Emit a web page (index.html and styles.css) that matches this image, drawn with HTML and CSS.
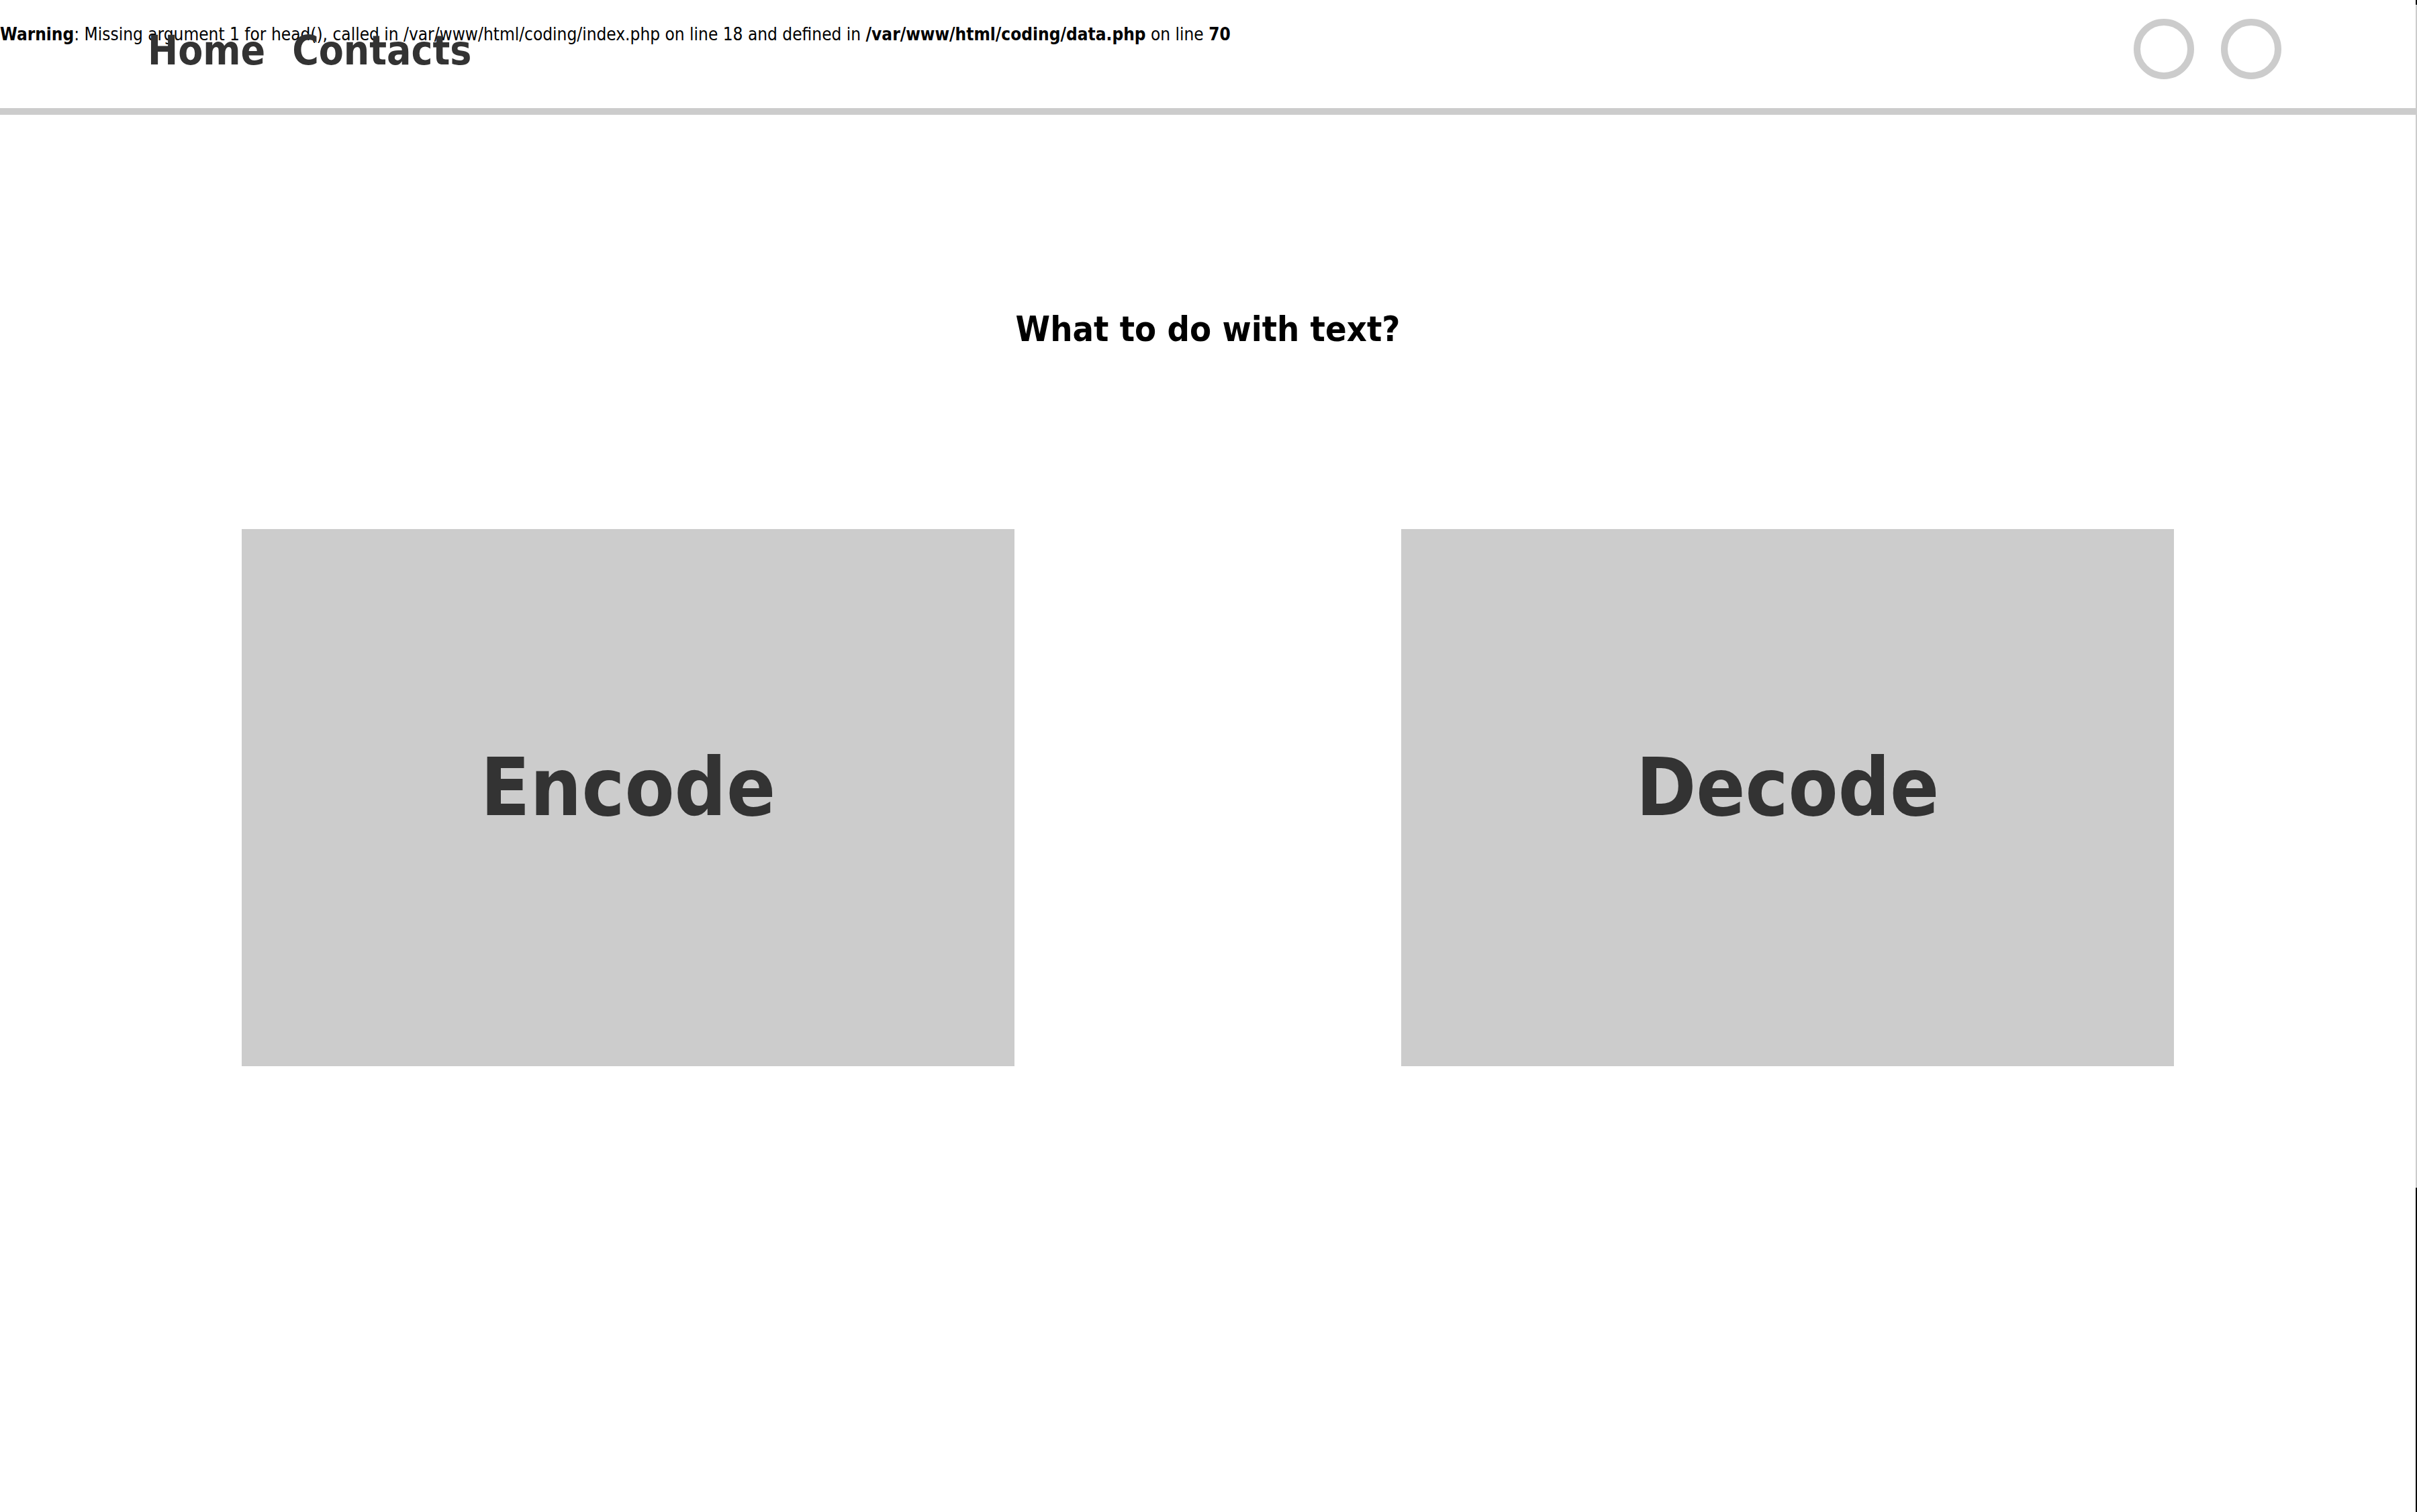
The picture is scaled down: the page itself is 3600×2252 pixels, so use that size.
FILE: index.html
```html
<!DOCTYPE html>
<html lang="en">
<head>
<meta charset="utf-8">
<meta name="viewport" content="width=device-width, initial-scale=1">
<title>Coding</title>
<link rel="stylesheet" href="styles.css">
</head>
<body>
<div class="page">
  <p class="warning"><b>Warning</b>: Missing argument 1 for head(), called in /var/www/html/coding/index.php on line 18 and defined in <b>/var/www/html/coding/data.php</b> on line <b>70</b></p>
  <header class="header">
    <nav class="menu">
      <a href="#">Home</a>
      <a href="#">Contacts</a>
    </nav>
    <div class="social">
      <a class="circle" href="#" aria-label="Profile"></a>
      <a class="circle" href="#" aria-label="Settings"></a>
    </div>
  </header>
  <main class="content">
    <h1 class="title">What to do with text?</h1>
    <div class="choices">
      <a class="choice" href="#">Encode</a>
      <a class="choice" href="#">Decode</a>
    </div>
  </main>
</div>
<div class="track"><div class="thumb"></div></div>
</body>
</html>
```
FILE: styles.css
```css
* {
  box-sizing: border-box;
}

body {
  display: flex;
  min-height: 100vh;
  margin: 0;
  font-family: "DejaVu Sans Condensed", Tahoma, sans-serif;
  color: #000;
}

a {
  color: #333;
  text-decoration: none;
}

.page {
  position: relative;
  flex: 1;
  background: #fff;
}

/* Sits under the menu, at the top of the page */
.warning {
  position: absolute;
  top: 35px;
  left: 0;
  margin: 0;
  font-size: 26px;
  line-height: 32px;
  white-space: nowrap;
}

.header {
  position: relative;
  display: flex;
  justify-content: space-between;
  align-items: flex-start;
  height: 171px;
  padding: 28px 200px 0 220px;
  border-bottom: 10px solid #ccc;
}

.menu {
  display: flex;
  gap: 40px;
  font-size: 60px;
  font-weight: bold;
  line-height: 94px;
}

.social {
  display: flex;
  gap: 40px;
}

.circle {
  width: 90px;
  height: 90px;
  border: 10px solid #ccc;
  border-radius: 50%;
}

.title {
  margin: 287px 0 0;
  font-size: 52px;
  line-height: 64px;
  text-align: center;
}

.choices {
  display: flex;
  justify-content: space-between;
  padding: 266px 10% 0;
}

.choice {
  display: flex;
  justify-content: center;
  align-items: center;
  width: 40%;
  height: 800px;
  padding-bottom: 32px;
  background: #ccc;
  font-size: 120px;
  font-weight: bold;
}

.track {
  width: 2px;
  padding-top: 7px;
  background: #000;
}

.thumb {
  height: 1762px;
  background: #ccc;
}
```
